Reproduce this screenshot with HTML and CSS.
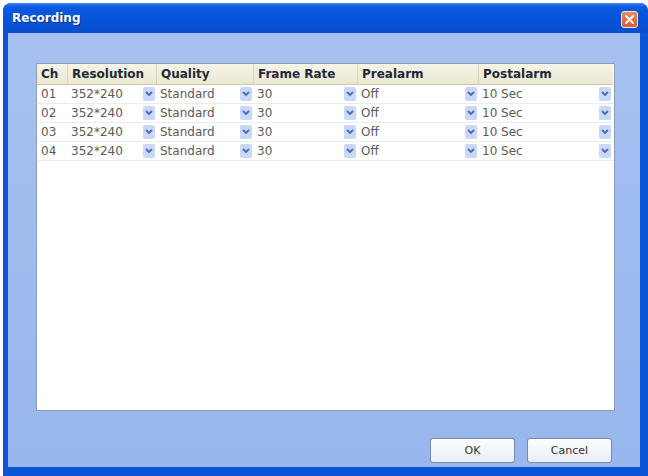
FILE: index.html
```html
<!DOCTYPE html>
<html lang="en">
<head>
  <meta charset="UTF-8">
  <title>Recording</title>
  <link rel="stylesheet" href="styles.css">
</head>
<body>
  <div class="window">
    <div class="titlebar">
      <span class="title">Recording</span>
      <span class="close">
        <svg width="9" height="9" viewBox="0 0 9 9"><path d="M1 1 L8 8 M8 1 L1 8" stroke="#fff" stroke-width="2" stroke-linecap="round"/></svg>
      </span>
    </div>

    <div class="client">
      <!-- Channel recording grid -->
      <div class="panel">
        <div class="grid">
          <div class="head">Ch</div>
          <div class="head">Resolution</div>
          <div class="head">Quality</div>
          <div class="head">Frame Rate</div>
          <div class="head">Prealarm</div>
          <div class="head last">Postalarm</div>
        </div>
        <div id="rows"></div>
      </div>

      <div class="buttons">
        <button type="button">OK</button>
        <button type="button">Cancel</button>
      </div>
    </div>
  </div>

  <script>
    // Build the four channel rows
    const rows = document.getElementById('rows');
    const arrow = '<span class="drop"><svg width="8" height="6" viewBox="0 0 8 6"><path d="M1 1 L4 4 L7 1" fill="none" stroke="#4a6bb8" stroke-width="1.8"/></svg></span>';
    ['01', '02', '03', '04'].forEach(function (ch) {
      const row = document.createElement('div');
      row.className = 'grid row';
      row.innerHTML =
        '<div class="cell ch">' + ch + '</div>' +
        '<div class="cell"><span class="val">352*240</span>' + arrow + '</div>' +
        '<div class="cell"><span class="val">Standard</span>' + arrow + '</div>' +
        '<div class="cell"><span class="val">30</span>' + arrow + '</div>' +
        '<div class="cell"><span class="val">Off</span>' + arrow + '</div>' +
        '<div class="cell"><span class="val">10 Sec</span>' + arrow + '</div>';
      rows.appendChild(row);
    });
  </script>
</body>
</html>
```

FILE: styles.css
```css
body {
  margin: 0;
  background: #fff;
  font-family: "DejaVu Sans", sans-serif;
}
.window {
  margin: 3px 0 0 3px;
  width: 645px;
  height: 473px;
  display: flex;
  flex-direction: column;
  background: #0c54d6;
  border-radius: 8px 8px 0 0;
}
.titlebar {
  height: 30px;
  display: flex;
  align-items: center;
  padding: 0 10px 0 9px;
  border-radius: 8px 8px 0 0;
  background: linear-gradient(#3d86f0 0, #0b5ae0 4px, #0653db 50%, #0a4fcc 100%);
}
.title {
  color: #fff;
  font-weight: bold;
  font-size: 12px;
  text-shadow: 1px 1px 0 #0a2f8a;
}
.close {
  margin-left: auto;
  margin-top: 2px;
  width: 15px;
  height: 15px;
  display: flex;
  align-items: center;
  justify-content: center;
  border: 1px solid #f2e6e0;
  border-radius: 3px;
  background: linear-gradient(#ec8a63, #d95a2f);
}
.client {
  flex: 1;
  margin: 0 8px 9px 5px;
  padding: 30px 25px 4px 28px;
  display: flex;
  flex-direction: column;
  background: linear-gradient(#a6c1f1, #98b7ed);
}
.panel {
  flex: 1;
  background: #fff;
  border: 1px solid #8e9cb6;
}
.grid {
  display: grid;
  grid-template-columns: 31px 89px 97px 104px 121px 134px;
}
.head {
  height: 20px;
  line-height: 20px;
  padding-left: 4px;
  font-size: 12px;
  font-weight: bold;
  color: #1e2a3a;
  background: linear-gradient(#f6f4e6, #ebe7d1);
  border-bottom: 1px solid #cdc7ac;
  border-right: 1px solid #d8d2bb;
}
.head.last {
  border-right: none;
}
.row {
  height: 18px;
  border-bottom: 1px solid #ececec;
}
.cell {
  display: flex;
  align-items: center;
  padding-left: 3px;
  font-size: 12px;
  color: #5a5a5a;
}
.val {
  flex: 1;
}
.cell.ch {
  padding-left: 4px;
}
.drop {
  flex: none;
  width: 12px;
  height: 14px;
  margin-right: 2px;
  display: flex;
  align-items: center;
  justify-content: center;
  border-radius: 2px;
  background: #c9d8f6;
}
.buttons {
  display: flex;
  justify-content: flex-end;
  gap: 12px;
  margin-top: 27px;
  padding-right: 3px;
}
button {
  width: 85px;
  height: 25px;
  font-family: "DejaVu Sans", sans-serif;
  font-size: 11px;
  color: #333;
  background: linear-gradient(#fdfdfd, #e8edf6);
  border: 1px solid #7b8aa6;
  border-radius: 3px;
}
```
